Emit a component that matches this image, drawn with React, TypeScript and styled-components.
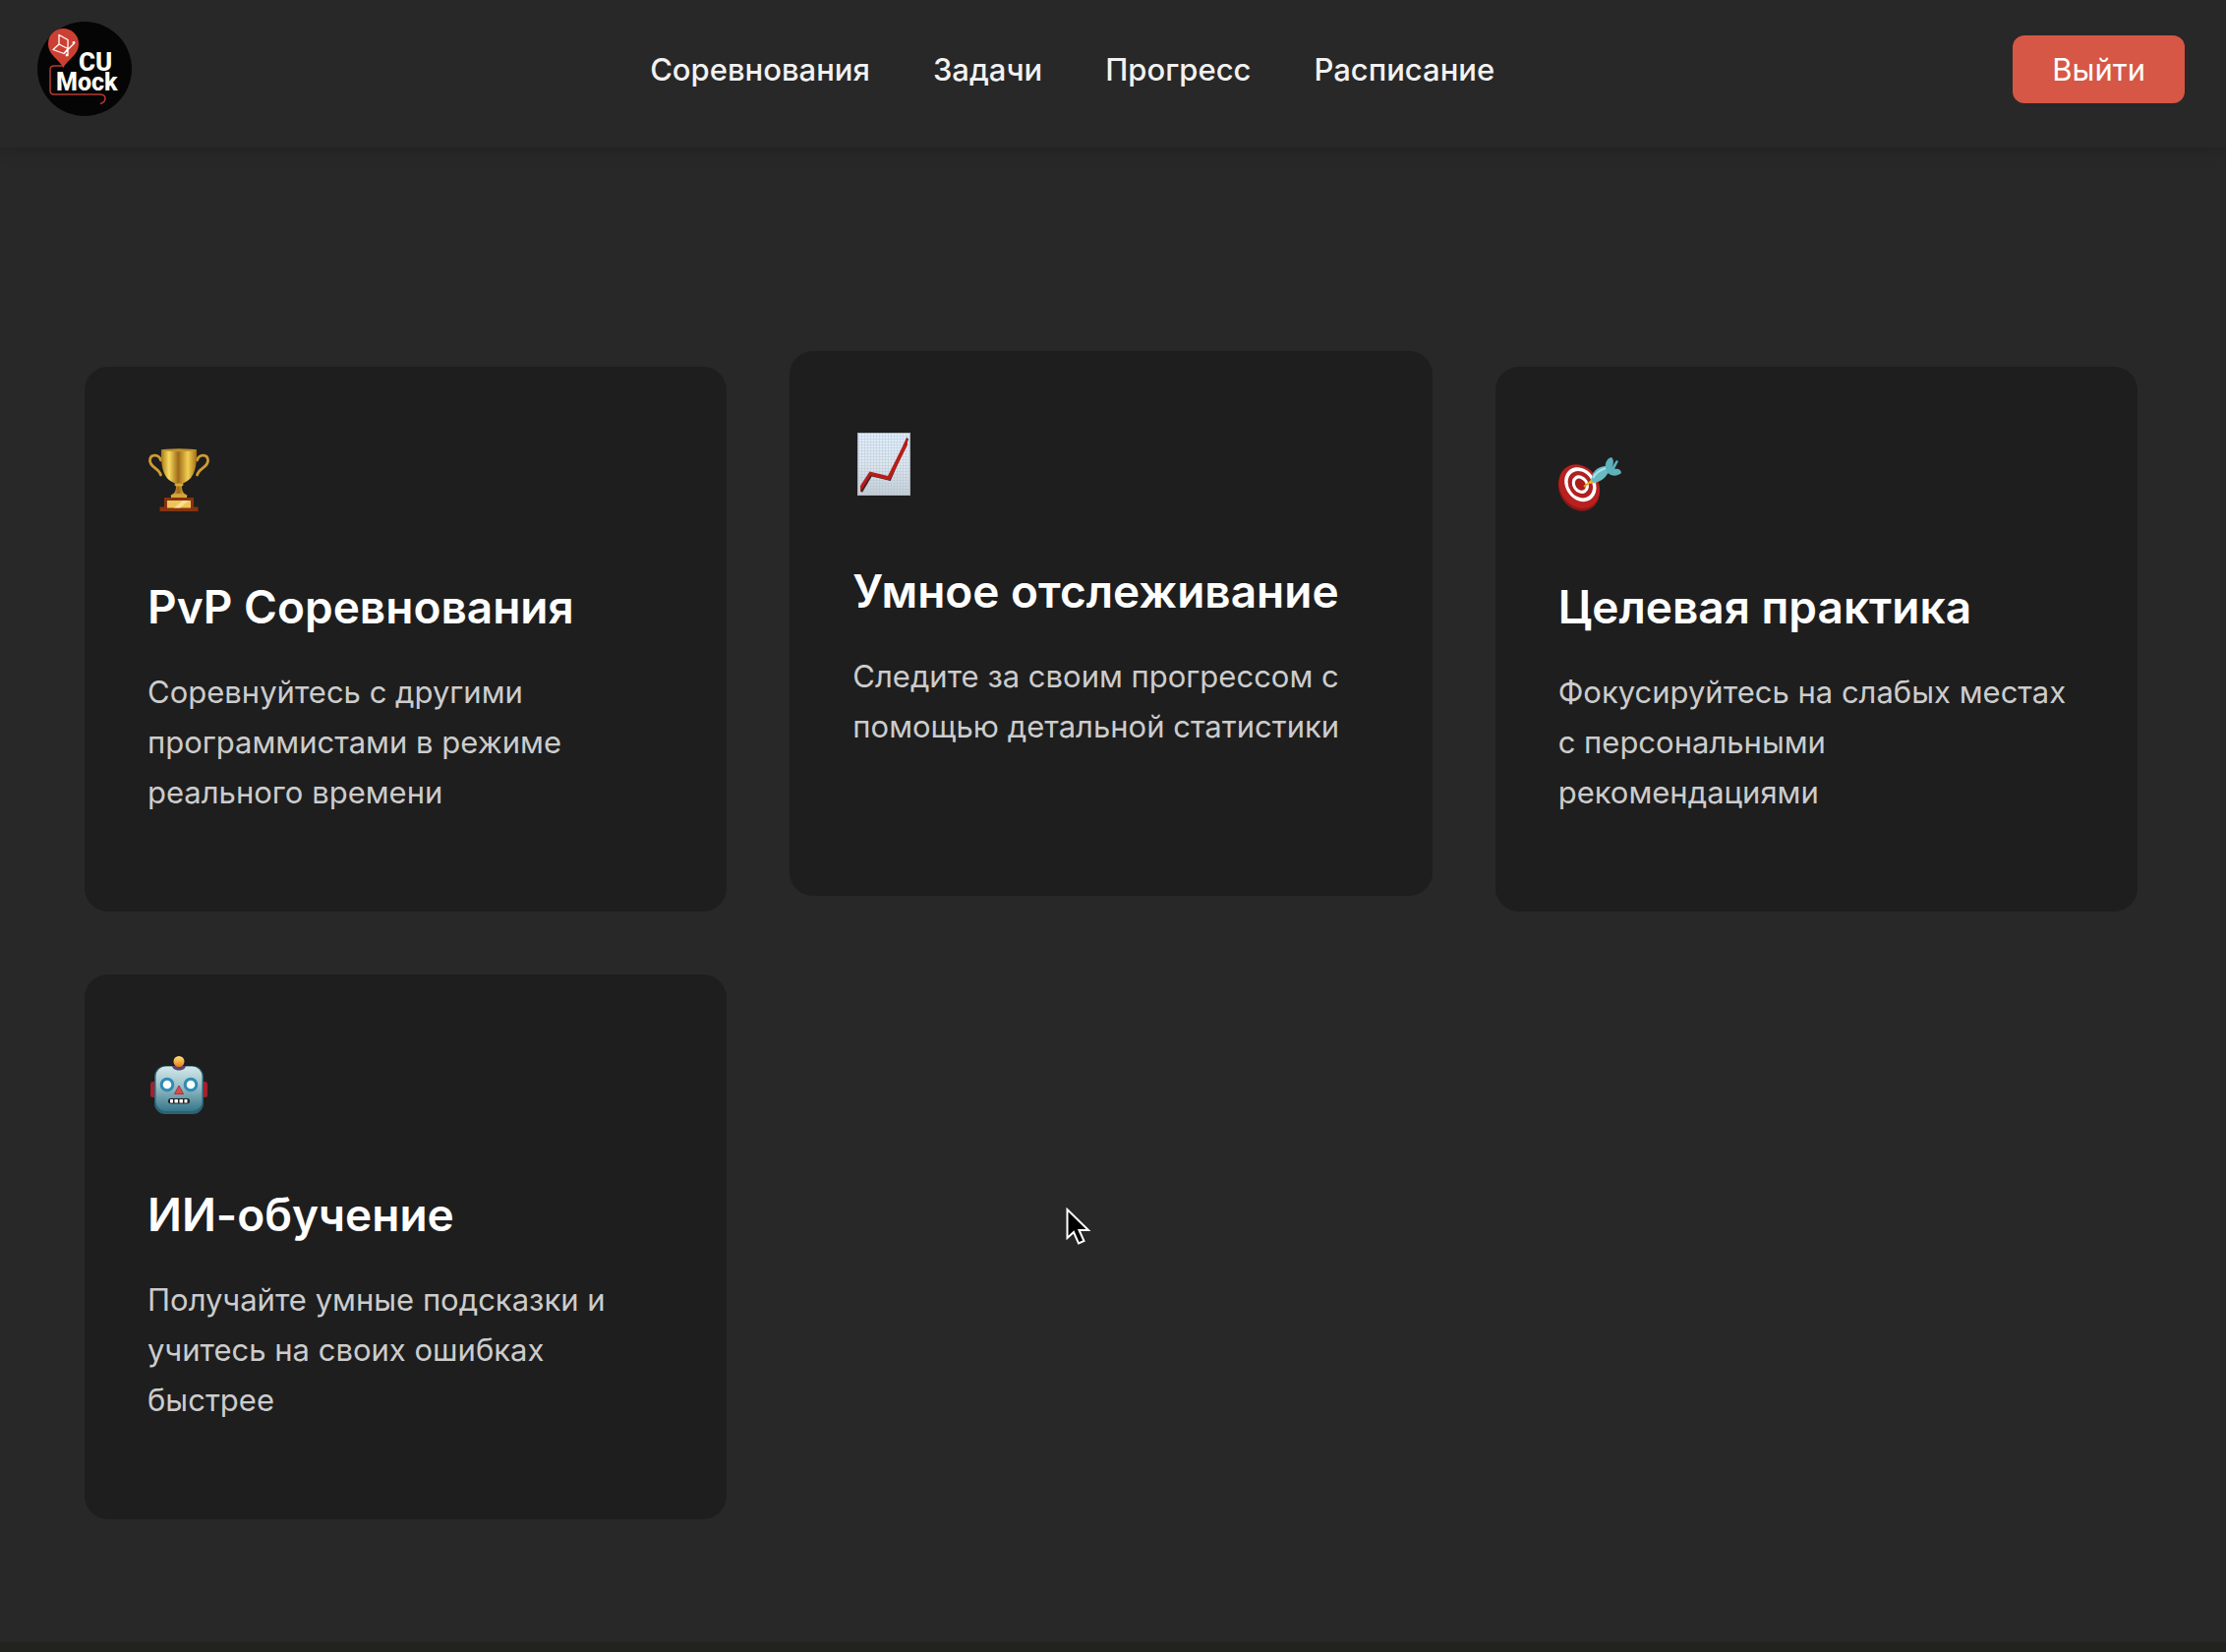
import React from "react";
import styled, { createGlobalStyle } from "styled-components";

const GlobalStyle = createGlobalStyle`
  *, *::before, *::after { box-sizing: border-box; }
  body {
    margin: 0;
    background: #22231e;
    color: #ffffff;
    font-family: Inter, "Noto Sans", sans-serif;
    font-size: 31px;
    line-height: 51px;
    -webkit-font-smoothing: antialiased;
  }
`;

const Page = styled.div`
  position: relative;
  background: #282828;
`;

const Header = styled.header`
  display: flex;
  align-items: center;
  justify-content: space-between;
  padding: 22px 42px 32px 38px;
  background: #282828;
  box-shadow: 0 4px 16px rgba(0, 0, 0, 0.16);
`;

const LogoLink = styled.a`
  display: block;
  width: 96px;
  height: 96px;

  svg { display: block; }
`;

const Nav = styled.nav`
  display: flex;
  gap: 64px;
`;

const NavLink = styled.a`
  color: #f2f2f2;
  font-weight: 500;
  text-decoration: none;
`;

const LogoutButton = styled.button`
  padding: 9px 40px;
  border: 0;
  border-radius: 12px;
  background: #d65745;
  color: #ffffff;
  font: inherit;
  cursor: pointer;
`;

const Main = styled.main`
  padding: 223px 90px 125px 86px;
`;

const Grid = styled.section`
  display: grid;
  grid-template-columns: repeat(3, 1fr);
  gap: 64px;
`;

const Card = styled.article<{ $raised?: boolean }>`
  padding: 64px;
  border-radius: 24px;
  background: #1e1e1e;
  transform: ${(p) => (p.$raised ? "translateY(-16px)" : "none")};
`;

const IconBox = styled.div`
  display: flex;
  align-items: center;
  height: 102px;
  margin-bottom: 40px;
`;

const Title = styled.h3`
  margin: 0 0 22px;
  font-size: 46px;
  line-height: 77px;
  font-weight: 600;
`;

const Text = styled.p`
  margin: 0 0 32px;
  color: #cccccc;
`;

const Footer = styled.footer`
  height: 10px;
  background: #22231e;
`;

const Pointer = styled.svg`
  position: absolute;
  left: 1084px;
  top: 1228px;
  pointer-events: none;
`;

const Logo = () => (
  <svg width="96" height="96" viewBox="0 0 96 96" role="img" aria-label="CU Mock">
    <circle cx="48" cy="48" r="48" fill="#050505" />
    <path d="M26 45H17q-4 0-4 4v21q0 4 4 4h46q6 0 6 4t-5 5.500" fill="none" stroke="#b83a30" strokeWidth="1.500" />
    <path d="M26.500 47C22 38 11 34 11 22.500a15.500 15.500 0 0 1 31 0C42 34 31 38 26.500 47z" fill="#cc4033" />
    <path d="M22 13.500l9 5v9l-9-4.500zM22 23l-6 5.500 11 4 10-10M27 32.500l4-5M31 27.500v7" fill="none" stroke="#fff" strokeWidth="1.300" strokeLinejoin="round" />
    <circle cx="37" cy="21.500" r="1.400" fill="#fff" />
    <circle cx="30" cy="34" r="1.400" fill="#fff" />
    <text fill="#fffef4" fontFamily="Roboto, sans-serif" fontWeight="800" fontSize="26">
      <tspan x="42" y="50">CU</tspan>
      <tspan x="19" y="70" fontSize="25">Mock</tspan>
    </text>
  </svg>
);

const Trophy = () => (
  <svg width="64" height="64" viewBox="0 0 64 64" aria-hidden="true">
    <defs>
      <linearGradient id="cup">
        <stop offset="0" stopColor="#a97813" />
        <stop offset=".22" stopColor="#f9dc62" />
        <stop offset=".48" stopColor="#9d6a17" />
        <stop offset=".75" stopColor="#f3cf52" />
        <stop offset="1" stopColor="#a26d12" />
      </linearGradient>
    </defs>
    <g fill="none" stroke="#cf9b32" strokeWidth="2.800" strokeLinecap="round">
      <path d="M13.500 12C12 6 3 5 2.500 12c-.5 7 9 8 11 15" />
      <path d="M50.500 12c1.500-6 10.500-7 11 0 .5 7-9 8-11 15" />
    </g>
    <path d="M14 1.500h36c.5 13-1 28-11 32.500-3 1.500-4 2.500-4 4.500 0 5 1.500 7 5 9.500v2H24v-2c3.500-2.500 5-4.500 5-9.500 0-2-1-3-4-4.500C15 29.500 13.500 14.500 14 1.500z" fill="url(#cup)" />
    <ellipse cx="32" cy="1.700" rx="18" ry="1.500" fill="#c29232" />
    <ellipse cx="32" cy="37" rx="4.500" ry="1.500" fill="#dda93c" />
    <ellipse cx="32" cy="48" rx="8.500" ry="2" fill="#d9a33b" />
    <path d="M17 50h30v9.500h4.500V64h-39v-4.500H17z" fill="#85330f" />
    <path d="M20 53h24v7.500H20z" fill="#efc35c" />
    <path d="M27 60.500l9-7.500h6l-9 7.500z" fill="#f9df92" />
  </svg>
);

const Chart = () => (
  <svg width="64" height="64" viewBox="0 0 64 64" aria-hidden="true">
    <defs>
      <linearGradient id="paper" x2="0" y2="1">
        <stop offset="0" stopColor="#e3eefa" />
        <stop offset=".5" stopColor="#e1e7ed" />
        <stop offset="1" stopColor="#c7cdd2" />
      </linearGradient>
      <pattern id="gridLines" width="3" height="3" patternUnits="userSpaceOnUse">
        <path d="M0 .5h3M.5 0v3" stroke="#a9c5da" strokeWidth=".6" opacity=".7" />
      </pattern>
    </defs>
    <rect x="5" y="0" width="54" height="64" fill="url(#paper)" />
    <rect x="5.500" y=".5" width="53" height="63" fill="url(#gridLines)" stroke="#aeb5b9" />
    <path d="M9 60l10-17 19 4.500L56 6" fill="none" stroke="#45202a" strokeWidth="2.500" />
    <path d="M8 54l9.500-14.500L36 44 56 4v8.500L38 48.500l-19.500-5L8 60z" fill="#b81d18" />
  </svg>
);

const Target = () => (
  <svg width="64" height="64" viewBox="0 0 64 64" aria-hidden="true">
    <g transform="translate(-1 0) rotate(-34 22 40)">
      <ellipse cx="21" cy="41" rx="19.500" ry="23.500" fill="#8f1816" />
      <ellipse cx="23" cy="39" rx="19.500" ry="23.500" fill="#b8211f" />
      <ellipse cx="25" cy="38" rx="15" ry="18.500" fill="#fff" />
      <ellipse cx="25" cy="38" rx="11.800" ry="14.500" fill="#b02020" />
      <ellipse cx="25" cy="38" rx="8" ry="9.800" fill="#fff" />
      <ellipse cx="25" cy="38" rx="5" ry="6.500" fill="#a91d1c" />
    </g>
    <path d="M26 39l10-8" stroke="#dca51f" strokeWidth="2" />
    <path d="M31 36l3-6 5 5z" fill="#e6b62a" />
    <path d="M34 29c1-6 7-11 14-11l4 4c-3 7-8 12-16 13-2-1-3-3-2-6z" fill="#68bac5" />
    <path d="M48 20c-1-6 2-10 6-11 3 3 2 8 0 11l5-8 2 1-4 8c4-1 7 1 7 4-5 4-10 3-14 0z" fill="#5cb1bd" />
    <path d="M35 30c3-5 7-8 13-10" fill="none" stroke="#a6e4e8" strokeWidth="2" />
  </svg>
);

const Robot = () => (
  <svg width="64" height="64" viewBox="0 0 64 64" aria-hidden="true">
    <defs>
      <linearGradient id="face" x2="0" y2="1">
        <stop offset="0" stopColor="#d3e8e9" />
        <stop offset=".4" stopColor="#9fc4cb" />
        <stop offset="1" stopColor="#35768a" />
      </linearGradient>
      <linearGradient id="bulb" x2="0" y2="1">
        <stop offset="0" stopColor="#ffe377" />
        <stop offset="1" stopColor="#e97b17" />
      </linearGradient>
    </defs>
    <rect x="3" y="26" width="7" height="16" rx="2.500" fill="#a5202d" />
    <rect x="54" y="26" width="7" height="16" rx="2.500" fill="#a5202d" />
    <rect x="7" y="10" width="50" height="49" rx="11" fill="#2c6274" />
    <rect x="8.500" y="10.500" width="47" height="45.500" rx="10" fill="url(#face)" />
    <path d="M25 10h14c-1 6-13 6-14 0z" fill="#564472" />
    <circle cx="32" cy="5.500" r="5.500" fill="url(#bulb)" />
    <g fill="#fff" stroke="#2f8bb4" strokeWidth="3">
      <circle cx="20" cy="29" r="5.800" />
      <circle cx="44" cy="29" r="5.800" />
    </g>
    <path d="M32 30l4.500 8.500h-9z" fill="#d64c51" stroke="#a9333d" />
    <rect x="21" y="43" width="22" height="5.500" rx="2.700" fill="#222" />
    <path d="M23 44h3v3.500h-3zM27.500 44h3.500v3.500h-3.500zM32.500 44H36v3.500h-3.500zM37.500 44h3v3.500h-3z" fill="#fff" />
  </svg>
);

const links = ["Соревнования", "Задачи", "Прогресс", "Расписание"];

const features = [
  { icon: <Trophy />, title: "PvP Соревнования", text: "Соревнуйтесь с другими программистами в режиме реального времени" },
  { icon: <Chart />, title: "Умное отслеживание", text: "Следите за своим прогрессом с помощью детальной статистики", raised: true },
  { icon: <Target />, title: "Целевая практика", text: "Фокусируйтесь на слабых местах с персональными рекомендациями" },
  { icon: <Robot />, title: "ИИ-обучение", text: "Получайте умные подсказки и учитесь на своих ошибках быстрее" },
];

export default function App() {
  return (
    <>
      <GlobalStyle />
      <Page>
        <Header>
          <LogoLink href="#"><Logo /></LogoLink>
          <Nav>
            {links.map((l) => <NavLink key={l} href="#">{l}</NavLink>)}
          </Nav>
          <LogoutButton type="button">Выйти</LogoutButton>
        </Header>
        <Main>
          <Grid>
            {features.map((f) => (
              <Card key={f.title} $raised={f.raised}>
                <IconBox>{f.icon}</IconBox>
                <Title>{f.title}</Title>
                <Text>{f.text}</Text>
              </Card>
            ))}
          </Grid>
        </Main>
        <Footer />
        <Pointer width="26" height="40" viewBox="0 0 26 40" aria-hidden="true">
          <path d="M1.500 2v29l6.500-6 5 11.500 5.500-2.500-5-11H23z" fill="#000" stroke="#fff" strokeWidth="2" />
        </Pointer>
      </Page>
    </>
  );
}
